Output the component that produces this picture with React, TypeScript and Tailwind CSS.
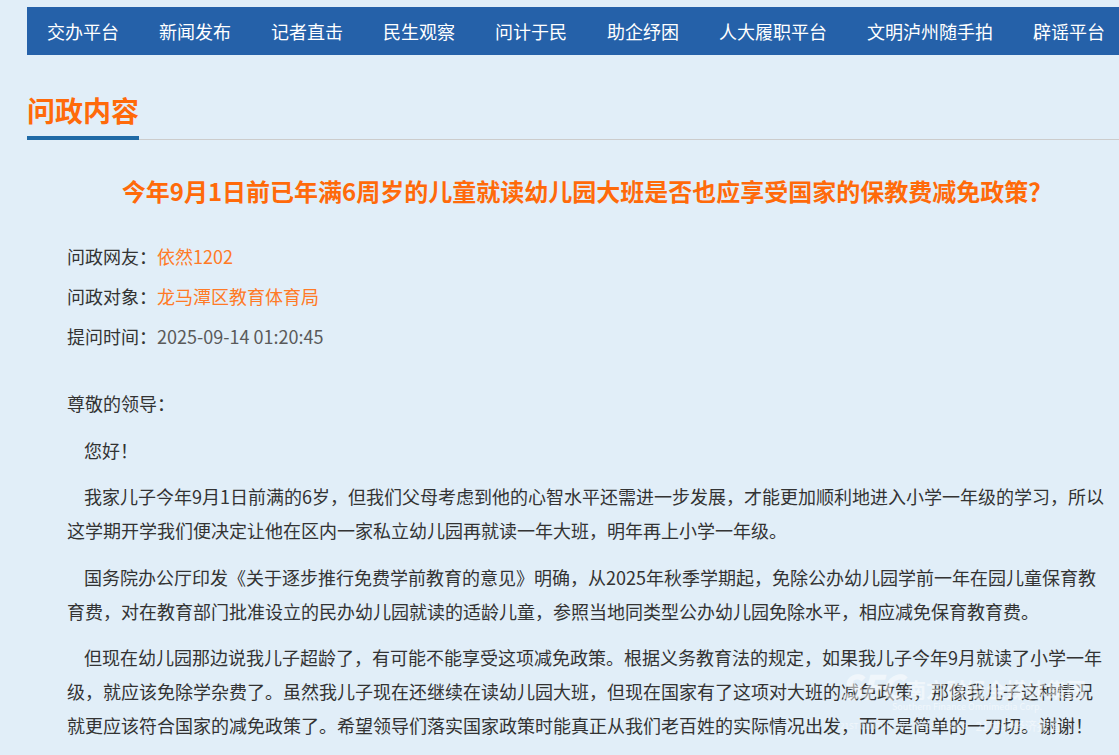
import React from "react";

const navItems = [
  "交办平台",
  "新闻发布",
  "记者直击",
  "民生观察",
  "问计于民",
  "助企纾困",
  "人大履职平台",
  "文明泸州随手拍",
  "辟谣平台",
];

const paragraphs = [
  "我家儿子今年9月1日前满的6岁，但我们父母考虑到他的心智水平还需进一步发展，才能更加顺利地进入小学一年级的学习，所以这学期开学我们便决定让他在区内一家私立幼儿园再就读一年大班，明年再上小学一年级。",
  "国务院办公厅印发《关于逐步推行免费学前教育的意见》明确，从2025年秋季学期起，免除公办幼儿园学前一年在园儿童保育教育费，对在教育部门批准设立的民办幼儿园就读的适龄儿童，参照当地同类型公办幼儿园免除水平，相应减免保育教育费。",
  "但现在幼儿园那边说我儿子超龄了，有可能不能享受这项减免政策。根据义务教育法的规定，如果我儿子今年9月就读了小学一年级，就应该免除学杂费了。虽然我儿子现在还继续在读幼儿园大班，但现在国家有了这项对大班的减免政策，那像我儿子这种情况就更应该符合国家的减免政策了。希望领导们落实国家政策时能真正从我们老百姓的实际情况出发，而不是简单的一刀切。谢谢！",
];

const font = { fontFamily: '"Microsoft YaHei", "Noto Sans CJK SC", sans-serif' };

export default function App() {
  return (
    <div
      className="min-h-screen w-full overflow-hidden bg-[#e1eef8] pt-[7px]"
      style={font}
    >
      <div className="ml-[27px] w-[1120px] shrink-0">
        {/* top navigation */}
        <nav className="flex h-12 items-center bg-[#2561a9] whitespace-nowrap">
          {navItems.map((item) => (
            <a key={item} className="px-5 text-[18px] leading-[48px] text-white">
              {item}
            </a>
          ))}
        </nav>

        {/* section header */}
        <div className="mt-[35px] flex border-b border-[#cccccc]">
          <h2 className="-mb-px border-b-4 border-[#1f6aa6] pb-[6px] text-[28px] font-bold leading-[40px] text-[#ff6a0a]">
            问政内容
          </h2>
        </div>

        <div className="relative px-10">
          <h1 className="mt-[33px] text-center text-[24px] font-bold leading-[36px] text-[#ff6a0a]">
            今年9月1日前已年满6周岁的儿童就读幼儿园大班是否也应享受国家的保教费减免政策？
          </h1>

          <div className="mt-[27px] text-[18px] leading-[40px] text-[#333333]">
            <div>
              问政网友：<span className="text-[#ff7a26]">依然1202</span>
            </div>
            <div>
              问政对象：<span className="text-[#ff7a26]">龙马潭区教育体育局</span>
            </div>
            <div>
              提问时间：<span className="text-[#5a5a5a]">2025-09-14 01:20:45</span>
            </div>
          </div>

          <div className="mt-[30px] w-[1040px] text-[18px] leading-[34px] text-[#333333]">
            <p className="mb-[12.5px]">尊敬的领导：</p>
            <p className="mb-[12.5px] indent-[17px]">您好！</p>
            {paragraphs.map((p, i) => (
              <p key={i} className="mb-[12.5px] indent-[17px]">
                {p}
              </p>
            ))}
          </div>

          {/* faint watermark from the source image */}
          <div className="pointer-events-none absolute left-[813px] top-[498px] flex flex-col text-white opacity-50">
            <div className="flex items-end gap-1">
              <span className="text-[34px] font-black italic leading-[30px] tracking-tight">SFC</span>
              <span className="text-[20px] font-bold leading-[22px]">南方财经全媒体集团</span>
            </div>
            <span className="ml-[52px] text-[9px] leading-[12px]">Southern Finance Omnimedia Corp.</span>
            <div className="mt-[6px] flex items-center gap-2">
              <span className="text-[8px] leading-[10px]">21ST CENTURY BUSINESS HERALD</span>
              <span className="text-[12px] leading-[14px]">21世纪经济报道</span>
            </div>
          </div>
        </div>
      </div>
    </div>
  );
}
